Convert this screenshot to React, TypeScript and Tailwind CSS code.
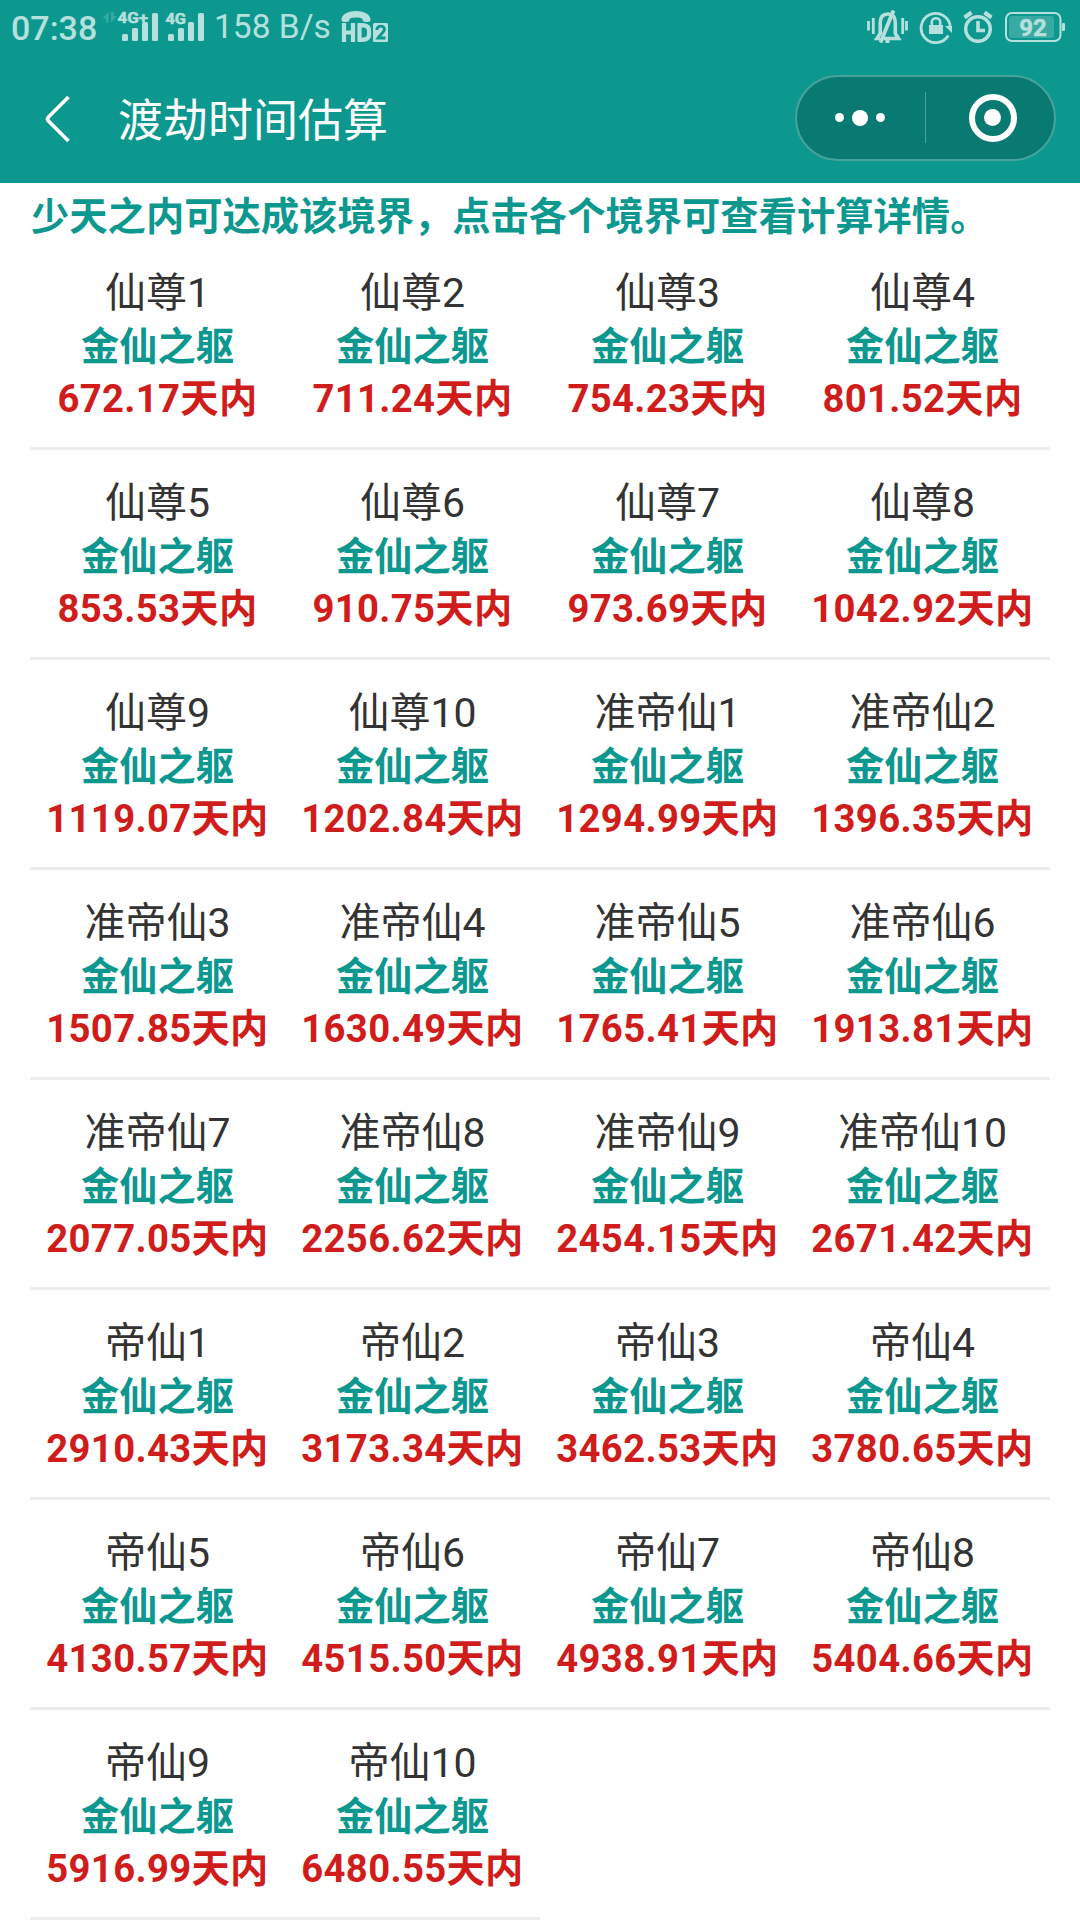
import React from "react";

// --- données ---------------------------------------------------------------

/** Une étape : nom du royaume et nombre de jours estimé */
type Realm = {
  name: string;
  days: string;
};

const BODY = "金仙之躯";

const REALMS: Realm[] = [
  { name: "仙尊1", days: "672.17" },
  { name: "仙尊2", days: "711.24" },
  { name: "仙尊3", days: "754.23" },
  { name: "仙尊4", days: "801.52" },
  { name: "仙尊5", days: "853.53" },
  { name: "仙尊6", days: "910.75" },
  { name: "仙尊7", days: "973.69" },
  { name: "仙尊8", days: "1042.92" },
  { name: "仙尊9", days: "1119.07" },
  { name: "仙尊10", days: "1202.84" },
  { name: "准帝仙1", days: "1294.99" },
  { name: "准帝仙2", days: "1396.35" },
  { name: "准帝仙3", days: "1507.85" },
  { name: "准帝仙4", days: "1630.49" },
  { name: "准帝仙5", days: "1765.41" },
  { name: "准帝仙6", days: "1913.81" },
  { name: "准帝仙7", days: "2077.05" },
  { name: "准帝仙8", days: "2256.62" },
  { name: "准帝仙9", days: "2454.15" },
  { name: "准帝仙10", days: "2671.42" },
  { name: "帝仙1", days: "2910.43" },
  { name: "帝仙2", days: "3173.34" },
  { name: "帝仙3", days: "3462.53" },
  { name: "帝仙4", days: "3780.65" },
  { name: "帝仙5", days: "4130.57" },
  { name: "帝仙6", days: "4515.50" },
  { name: "帝仙7", days: "4938.91" },
  { name: "帝仙8", days: "5404.66" },
  { name: "帝仙9", days: "5916.99" },
  { name: "帝仙10", days: "6480.55" },
];

// --- barre d'état ----------------------------------------------------------

/** Barres de réseau avec le libellé 4G / 4G+ */
const Signals: React.FC = () => (
  <svg width="102" height="36" viewBox="102 9 102 36" fill="currentColor">
    <g opacity="0.25">
      <path d="M102.500 18.500 108.500 12v10.500h-2.500v-4z" />
      <path d="M117 16 111 22.500V12h2.500v4z" />
    </g>
    <text x="117.500" y="23" fontSize="15.500" fontWeight="700" stroke="currentColor" strokeWidth="0.500" textLength="30.500" lengthAdjust="spacingAndGlyphs">4G+</text>
    <rect x="122" y="34" width="6" height="7" rx="1.500" />
    <rect x="132" y="28" width="6" height="13" rx="1.500" />
    <rect x="142" y="22" width="6" height="19" rx="1.500" />
    <rect x="152" y="13" width="6" height="28" rx="1.500" />
    <text x="165.500" y="24" fontSize="15.500" fontWeight="700" stroke="currentColor" strokeWidth="0.500" textLength="20.500" lengthAdjust="spacingAndGlyphs">4G</text>
    <rect x="168" y="34" width="6" height="7" rx="1.500" />
    <rect x="178" y="28" width="6" height="13" rx="1.500" />
    <rect x="188" y="22" width="6" height="19" rx="1.500" />
    <rect x="198" y="13" width="6" height="28" rx="1.500" />
  </svg>
);

/** Combiné au-dessus de HD, carte SIM 2 */
const HdCall: React.FC = () => (
  <svg width="47" height="34" viewBox="341 10 47 34" fill="currentColor">
    <path d="M341.500 20c0-5.500 6-9 14.500-9s14.500 3.500 14.500 9c0 1.500-1.500 2-4 2s-4-.8-4-2.500c0-1.300-3-2-6.500-2s-6.500.7-6.500 2c0 1.700-1.500 2.500-4 2.500s-4-.5-4-2z" />
    <path
      d="M344 23v19M353 23v19M344 32.500h9M359.500 25.200v14.600c5.500.4 9.500-.8 9.500-5v-4.600c0-4.200-4-5.400-9.500-5z"
      fill="none"
      stroke="currentColor"
      strokeWidth="4.200"
    />
    <rect x="373" y="23" width="15" height="19" rx="1.500" />
    <path
      d="M376.800 30c.3-5 7.600-5 7.600-.7 0 2.800-3.800 4.700-6.400 8.700h7.500"
      fill="none"
      stroke="#0c988f"
      strokeWidth="2.900"
    />
  </svg>
);

const Silent: React.FC = () => (
  <svg width="42" height="36" viewBox="867 9 42 36" fill="none" stroke="currentColor">
    <path d="M868.500 21v9.500M873.300 18v16M902.700 18v16M906.500 21v9.500" strokeWidth="2.800" />
    <path d="M880 38.500h-3l3.200-5V23c0-6 3-9 7.800-9 4.500 0 7.300 3 7.300 9v10.500l3.200 5H884" strokeWidth="3.600" />
    <path d="m880.500 42.500 13-32" strokeWidth="3.800" />
    <path d="M887.500 39v4" strokeWidth="4" />
  </svg>
);

const RotationLock: React.FC = () => (
  <svg width="34" height="34" viewBox="919 10 34 34" fill="none" stroke="currentColor">
    <path d="M948.300 35.500A14.600 14.600 0 1 1 950.300 27" strokeWidth="2.800" />
    <path d="M945 26h7v7z" fill="currentColor" stroke="none" />
    <rect x="929" y="25" width="14" height="9" fill="currentColor" stroke="none" />
    <path d="M931.800 26v-4c0-5 8.400-5 8.400 0v4" strokeWidth="2.600" />
  </svg>
);

const Alarm: React.FC = () => (
  <svg width="30" height="34" viewBox="963 10 30 34" fill="none" stroke="currentColor">
    <circle cx="978" cy="29" r="12.300" strokeWidth="3.400" />
    <path d="m964.500 17.500 7-5M991.500 17.500l-7-5" strokeWidth="4" />
    <path d="M978 21v9.500h7" strokeWidth="3.600" />
  </svg>
);

const Battery: React.FC = () => (
  <svg width="61" height="32" viewBox="1005 11 61 32">
    <rect x="1006" y="13" width="54.500" height="28" rx="6" fill="none" stroke="currentColor" strokeWidth="2" />
    <rect x="1009" y="16" width="45" height="22" rx="3" fill="currentColor" opacity="0.250" />
    <rect x="1062" y="23" width="3" height="8" rx="1" fill="currentColor" />
    <text x="1033" y="35.800" fontSize="24" fontWeight="700" textAnchor="middle" fill="currentColor" stroke="currentColor" strokeWidth="0.500">92</text>
  </svg>
);

const StatusBar: React.FC = () => (
  <div className="flex h-[54px] items-center justify-between pl-[11px] pr-[14px] text-[#b6e0dd]">
    <div className="flex items-center">
      <span className="w-[91px] whitespace-nowrap pt-px text-[34px] font-medium leading-none">07:38</span>
      <Signals />
      <span className="ml-[10px] w-[127px] whitespace-nowrap text-[33.5px] leading-none">158 B/s</span>
      <HdCall />
    </div>
    <div className="flex items-center">
      <Silent />
      <span className="w-[10px]" />
      <RotationLock />
      <span className="w-[10px]" />
      <Alarm />
      <span className="w-[12px]" />
      <Battery />
    </div>
  </div>
);

// --- barre de titre --------------------------------------------------------

/** Capsule du mini-programme : menu et fermeture */
const Capsule: React.FC = () => (
  <div className="mb-[2px] flex h-[86px] w-[261px] items-center rounded-full border-2 border-[#48a39c] bg-[#097a71]">
    <div className="flex w-[128px] items-center justify-center gap-2 pr-[2px]">
      <span className="size-[9px] rounded-full bg-white" />
      <span className="size-4 rounded-full bg-white" />
      <span className="size-[9px] rounded-full bg-white" />
    </div>
    <div className="h-[51px] w-px bg-[#48a39c]" />
    <div className="flex flex-1 justify-center pl-[5px]">
      <div className="flex size-12 items-center justify-center rounded-full border-[6px] border-white">
        <span className="size-[17px] rounded-full bg-white" />
      </div>
    </div>
  </div>
);

const TitleBar: React.FC = () => (
  <div className="flex h-[129px] items-center pl-[44px] pr-6">
    <svg width="28" height="48" viewBox="0 0 28 48" fill="none" stroke="#fff" strokeWidth="3.600">
      <path d="M24.500 2 4.500 22q-2 2 0 4l20 20" strokeLinejoin="round" />
    </svg>
    <h1 className="ml-[46px] flex-1 pt-1.5 text-[45px] leading-none text-white">渡劫时间估算</h1>
    <Capsule />
  </div>
);

// --- grille ----------------------------------------------------------------

const RealmCell: React.FC<Realm> = ({ name, days }) => (
  <div className="h-[210px] whitespace-nowrap border-b-3 border-[#ededed] pt-[26px] text-center">
    <div className="h-[55px] text-[41px] leading-[55px] text-[#333]">{name}</div>
    <div className="h-[52px] text-[38.25px] font-bold leading-[52px] text-[#0c988f]">{BODY}</div>
    <div className="h-[52px] text-[38.25px] font-bold leading-[52px] tracking-[0.35px] text-[#d01c1a]">{days}天内</div>
  </div>
);

export default function App() {
  return (
    <div className="h-[1920px] w-[1080px] overflow-hidden bg-white font-[Roboto,'Noto_Sans_CJK_SC',sans-serif]">
      <header className="h-[183px] bg-[#0c988f]">
        <StatusBar />
        <TitleBar />
      </header>
      <main className="px-[30px]">
        <p className="h-[57px] whitespace-nowrap pl-px pt-[5px] text-[38.3px] font-bold leading-[57px] text-[#0c988f]">
          少天之内可达成该境界，点击各个境界可查看计算详情。
        </p>
        <div className="grid grid-cols-4">
          {REALMS.map((realm) => (
            <RealmCell key={realm.name} {...realm} />
          ))}
        </div>
      </main>
    </div>
  );
}
